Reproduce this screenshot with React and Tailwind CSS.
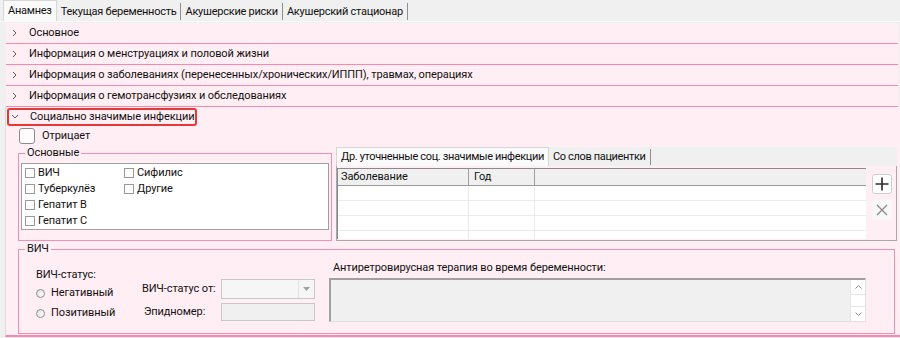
import React from 'react';

function ChevronRight() {
  return (
    <svg width="6" height="8" viewBox="0 0 6 8" className="shrink-0">
      <polyline points="1,1 4,4 1,7" fill="none" stroke="#5a5a5a" strokeWidth="1" />
    </svg>
  );
}

function ChevronDown() {
  return (
    <svg width="8" height="6" viewBox="0 0 8 6" className="shrink-0">
      <polyline points="1,1 4,4 7,1" fill="none" stroke="#5a5a5a" strokeWidth="1" />
    </svg>
  );
}

function SectionRow({ title }) {
  return (
    <div className="h-[21px] flex items-center bg-[#ffeef4] border-b border-[#ff86ab] mr-[2px]">
      <div className="w-[23px] shrink-0 pl-[6px] flex items-center">
        <ChevronRight />
      </div>
      <span className="whitespace-nowrap">{title}</span>
    </div>
  );
}

function SmallCheck({ label }) {
  return (
    <div className="h-[16px] flex items-center gap-[3px]">
      <span className="w-[10px] h-[10px] border border-[#9a9a9a] bg-white shrink-0" />
      <span className="whitespace-nowrap">{label}</span>
    </div>
  );
}

function Radio({ label }) {
  return (
    <div className="h-[20px] flex items-center gap-[6px]">
      <span className="w-[9px] h-[9px] rounded-full border border-[#8c8c8c] bg-gradient-to-br from-[#e0e0e0] to-white shrink-0" />
      <span className="whitespace-nowrap">{label}</span>
    </div>
  );
}

function GroupBox({ label, className, children }) {
  return (
    <div className={`relative border border-[#f48fb1] ${className}`}>
      <span className="absolute -top-[7px] left-[6px] px-[2px] leading-[12px] bg-[#ffeef4] whitespace-nowrap">
        {label}
      </span>
      {children}
    </div>
  );
}

export default function App() {
  const topTabs = ['Текущая беременность', 'Акушерские риски', 'Акушерский стационар'];
  const rows = [
    'Основное',
    'Информация о менструациях и половой жизни',
    'Информация о заболеваниях (перенесенных/хронических/ИППП), травмах, операциях',
    'Информация о гемотрансфузиях и обследованиях',
  ];

  return (
    <div className="w-[900px] h-[338px] overflow-hidden bg-[#f0f0f0] text-[11px] leading-[14px] tracking-[-0.1px] text-[#111] font-['Roboto',sans-serif] flex flex-col">
      {/* Top tabs */}
      <div className="h-[22px] shrink-0 flex items-end pl-[3px] border-b border-[#fafafa] tracking-[-0.25px]">
        <div className="h-[21px] px-[4px] flex items-center bg-[#fafafa] border-x border-t border-[#d6d6d6]">
          Анамнез
        </div>
        {topTabs.map((t) => (
          <div key={t} className="h-[17px] mb-[1px] px-[4px] flex items-center border-r border-[#8f8f8f] whitespace-nowrap">
            {t}
          </div>
        ))}
      </div>

      {/* Sections */}
      <div className="flex-1 pl-[6px] pt-[1px]">
        {rows.map((r) => (
          <SectionRow key={r} title={r} />
        ))}

        {/* Expanded section */}
        <div className="bg-[#ffeef4] border-b-2 border-[#ff86ab] h-[230px] -ml-[1px] border-l border-l-[#dcdcdc]">
          <div className="h-[20px] flex items-center pl-[1px]">
            <div className="h-[18px] w-[190px] flex items-center border-2 border-[#e53935] rounded-[3px]">
              <div className="w-[21px] shrink-0 pl-[2px] flex items-center">
                <ChevronDown />
              </div>
              <span className="whitespace-nowrap">Социально значимые инфекции</span>
            </div>
          </div>

          {/* Отрицает */}
          <div className="h-[18px] flex items-center pl-[13px] gap-[7px]">
            <span className="w-[16px] h-[16px] shrink-0 rounded-[3px] border border-[#8a8a8a] bg-[#fdfdfd]" />
            <span>Отрицает</span>
          </div>

          <div className="flex mt-[2px] h-[94px]">
            {/* Основные */}
            <GroupBox label="Основные" className="ml-[12px] mt-[6px] w-[314px] h-[88px]">
              <div className="mx-[2px] mt-[9px] h-[67px] border border-[#a0a0a0] bg-white flex pl-[3px]">
                <div className="w-[99px] pt-[1px]">
                  <SmallCheck label="ВИЧ" />
                  <SmallCheck label="Туберкулёз" />
                  <SmallCheck label="Гепатит B" />
                  <SmallCheck label="Гепатит C" />
                </div>
                <div className="pt-[1px]">
                  <SmallCheck label="Сифилис" />
                  <SmallCheck label="Другие" />
                </div>
              </div>
            </GroupBox>

            {/* Right tab control */}
            <div className="ml-[4px] w-[561px] flex flex-col">
              <div className="h-[19px] flex items-end bg-[#f0f0f0] tracking-[-0.35px]">
                <div className="h-[19px] px-[4px] flex items-center bg-[#fafafa] border-x border-t border-[#d6d6d6] whitespace-nowrap">
                  Др. уточненные соц. значимые инфекции
                </div>
                <div className="h-[16px] mb-[1px] px-[4px] flex items-center border-r border-[#8f8f8f] whitespace-nowrap">
                  Со слов пациентки
                </div>
              </div>
              <div className="flex-1 flex border-r border-b border-l border-[#a8a8a8] bg-[#ffeef4]">
                <div className="mt-[2px] w-[529px] h-[71px] border-t border-l border-[#8a8a8a] bg-white overflow-hidden">
                  <div className="h-[17px] flex bg-[#f0f0f0] border-b border-[#9a9a9a]">
                    <div className="w-[131px] pl-[3px] flex items-center border-r border-[#a0a0a0]">Заболевание</div>
                    <div className="w-[66px] pl-[5px] flex items-center border-r border-[#a0a0a0]">Год</div>
                    <div className="flex-1" />
                  </div>
                  {[0, 1, 2, 3].map((i) => (
                    <div key={i} className="h-[15px] flex border-b border-[#ebebeb]">
                      <div className="w-[131px] border-r border-[#ebebeb]" />
                      <div className="w-[66px] border-r border-[#ebebeb]" />
                      <div className="flex-1" />
                    </div>
                  ))}
                </div>
                <div className="flex-1 flex flex-col items-center pt-[8px] gap-[6px] pl-[2px]">
                  <button className="w-[20px] h-[20px] flex items-center justify-center bg-white border border-[#cfcfcf] rounded-[3px]">
                    <svg width="14" height="14" viewBox="0 0 14 14">
                      <path d="M7 0.5V13.5M0.5 7H13.5" stroke="#2b2b2b" strokeWidth="1.6" />
                    </svg>
                  </button>
                  <button className="w-[20px] h-[20px] flex items-center justify-center bg-[#f8f8f8] rounded-[3px]">
                    <svg width="12" height="12" viewBox="0 0 12 12">
                      <path d="M1 1L11 11M11 1L1 11" stroke="#8a8a8a" strokeWidth="1.3" />
                    </svg>
                  </button>
                </div>
              </div>
            </div>
          </div>

          {/* ВИЧ */}
          <GroupBox label="ВИЧ" className="ml-[12px] mt-[8px] w-[877px] h-[85px]">
            <div className="flex">
              <div className="w-[123px] shrink-0 pl-[17px] pt-[18px]">
                <div className="h-[14px] whitespace-nowrap">ВИЧ-статус:</div>
                <div className="mt-[1px]">
                  <Radio label="Негативный" />
                  <Radio label="Позитивный" />
                </div>
              </div>
              <div className="w-[187px] shrink-0 pt-[29px]">
                <div className="h-[20px] flex items-center">
                  <span className="w-[79px] shrink-0 whitespace-nowrap">ВИЧ-статус от:</span>
                  <div className="w-[94px] h-[20px] flex border border-[#c8c8c8] bg-[#f6f6f6]">
                    <div className="flex-1" />
                    <div className="w-[16px] flex items-center justify-center border-l border-[#e4e4e4]">
                      <svg width="7" height="4" viewBox="0 0 7 4">
                        <path d="M0 0H7L3.5 4Z" fill="#a0a0a0" />
                      </svg>
                    </div>
                  </div>
                </div>
                <div className="h-[18px] mt-[4px] flex items-center">
                  <span className="w-[79px] shrink-0 pl-[2px] whitespace-nowrap">Эпидномер:</span>
                  <div className="w-[94px] h-[18px] border border-[#c8c8c8] bg-[#f0f0f0]" />
                </div>
              </div>
              <div className="pt-[11px]">
                <div className="h-[14px] pl-[4px] whitespace-nowrap">Антиретровирусная терапия во время беременности:</div>
                <div className="mt-[3px] w-[537px] h-[44px] flex border-t-2 border-l-2 border-[#a0a0a0] border-b border-r border-b-[#e0e0e0] border-r-[#e0e0e0] bg-[#f0f0f0]">
                  <div className="flex-1" />
                  <div className="w-[15px] flex flex-col bg-white border-l border-[#e6e6e6]">
                    <div className="h-[14px] flex items-center justify-center">
                      <svg width="7" height="4" viewBox="0 0 7 4">
                        <polyline points="0.5,3.5 3.5,0.5 6.5,3.5" fill="none" stroke="#8a8a8a" strokeWidth="1" />
                      </svg>
                    </div>
                    <div className="flex-1 border-y border-[#e6e6e6]" />
                    <div className="h-[14px] flex items-center justify-center">
                      <svg width="7" height="4" viewBox="0 0 7 4">
                        <polyline points="0.5,0.5 3.5,3.5 6.5,0.5" fill="none" stroke="#8a8a8a" strokeWidth="1" />
                      </svg>
                    </div>
                  </div>
                </div>
              </div>
            </div>
          </GroupBox>
        </div>
      </div>
    </div>
  );
}
